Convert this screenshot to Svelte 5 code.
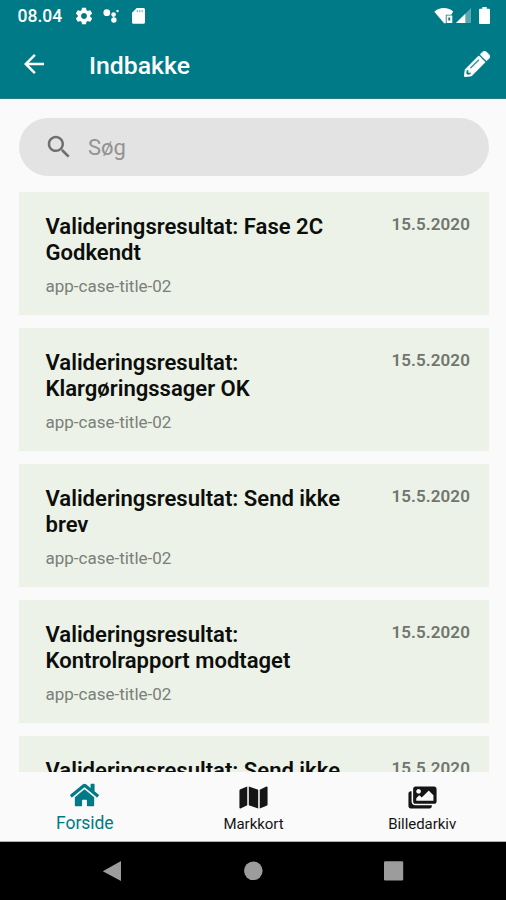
<script>
  const messages = [
    { title: 'Valideringsresultat: Fase 2C Godkendt', caseName: 'app-case-title-02', date: '15.5.2020' },
    { title: 'Valideringsresultat: Klargøringssager OK', caseName: 'app-case-title-02', date: '15.5.2020' },
    { title: 'Valideringsresultat: Send ikke brev', caseName: 'app-case-title-02', date: '15.5.2020' },
    { title: 'Valideringsresultat: Kontrolrapport modtaget', caseName: 'app-case-title-02', date: '15.5.2020' },
    { title: 'Valideringsresultat: Send ikke brev', caseName: 'app-case-title-02', date: '15.5.2020' },
  ];

  const tabs = [
    {
      label: 'Forside',
      icon: 'M280.37 148.26L96 300.11V464a16 16 0 0 0 16 16l112.06-.29a16 16 0 0 0 15.92-16V368a16 16 0 0 1 16-16h64a16 16 0 0 1 16 16v95.64a16 16 0 0 0 16 16.05L464 480a16 16 0 0 0 16-16V300L295.67 148.26a12.19 12.19 0 0 0-15.3 0zM571.6 251.47L488 182.56V44.05a12 12 0 0 0-12-12h-56a12 12 0 0 0-12 12v72.61L318.47 43a48 48 0 0 0-61 0L4.34 251.47a12 12 0 0 0-1.6 16.9l25.5 31A12 12 0 0 0 45.15 301l235.22-193.74a12.19 12.19 0 0 1 15.3 0L530.9 301a12 12 0 0 0 16.9-1.6l25.5-31a12 12 0 0 0-1.7-16.93z',
    },
    {
      label: 'Markkort',
      icon: 'M0 117.66v346.32c0 11.32 11.43 19.06 21.94 14.86L160 416V32L20.12 87.95A32.006 32.006 0 0 0 0 117.66zM192 416l192 64V96L192 32v384zM554.06 33.16L416 96v384l139.88-55.95A31.996 31.996 0 0 0 576 394.34V48.02c0-11.32-11.43-19.06-21.94-14.86z',
    },
    {
      label: 'Billedarkiv',
      icon: 'M480 416v16c0 26.51-21.49 48-48 48H48c-26.51 0-48-21.49-48-48V176c0-26.51 21.49-48 48-48h16v208c0 44.112 35.888 80 80 80h336zm96-80V80c0-26.51-21.49-48-48-48H144c-26.51 0-48 21.49-48 48v256c0 26.51 21.49 48 48 48h384c26.51 0 48-21.49 48-48zM256 128c0 26.51-21.49 48-48 48s-48-21.49-48-48 21.49-48 48-48 48 21.49 48 48zm-96 144l55.515-55.515c4.686-4.686 12.284-4.686 16.971 0L272 256l135.515-135.515c4.686-4.686 12.284-4.686 16.971 0L512 208v112H160v-48z',
    },
  ];

  let activeTab = 'Forside';
  let search = '';
</script>

<div class="screen">
  <header>
    <div class="status-bar">
      <span class="clock">08.04</span>
      <svg class="gear" viewBox="0 0 24 24">
        <path d="M19.43 12.98c.04-.32.07-.64.07-.98s-.03-.66-.07-.98l2.11-1.65c.19-.15.24-.42.12-.64l-2-3.46c-.12-.22-.39-.3-.61-.22l-2.49 1c-.52-.4-1.08-.73-1.69-.98l-.38-2.65C14.46 2.18 14.25 2 14 2h-4c-.25 0-.46.18-.49.42l-.38 2.65c-.61.25-1.17.59-1.69.98l-2.49-1c-.23-.09-.49 0-.61.22l-2 3.46c-.13.22-.07.49.12.64l2.11 1.65c-.04.32-.07.65-.07.98s.03.66.07.98l-2.11 1.65c-.19.15-.24.42-.12.64l2 3.46c.12.22.39.3.61.22l2.49-1c.52.4 1.08.73 1.69.98l.38 2.65c.03.24.24.42.49.42h4c.25 0 .46-.18.49-.42l.38-2.65c.61-.25 1.17-.59 1.69-.98l2.49 1c.23.09.49 0 .61-.22l2-3.46c.12-.22.07-.49-.12-.64l-2.11-1.65zM12 15.5c-1.93 0-3.5-1.57-3.5-3.5s1.57-3.5 3.5-3.5 3.5 1.57 3.5 3.5-1.57 3.5-3.5 3.5z" />
      </svg>
      <svg class="assistant" viewBox="0 0 16 16">
        <circle cx="3.8" cy="4.7" r="3.4" />
        <circle cx="10.6" cy="6.6" r="2.3" />
        <circle cx="14.5" cy="3" r="1.2" />
        <circle cx="10.9" cy="12" r="2.7" />
      </svg>
      <svg class="sd" viewBox="0 0 13 16">
        <path d="M4.7 0h6.8A1.5 1.5 0 0 1 13 1.5v12.7a1.5 1.5 0 0 1-1.5 1.5h-10A1.5 1.5 0 0 1 0 14.2V4.7z" />
        <path class="notch" d="M4.7 2h1.2v2.2H4.7zM7.1 2h1.2v2.2H7.1zM9.5 2h1.2v2.2H9.5z" />
      </svg>
      <span class="spacer"></span>
      <svg class="wifi" viewBox="0 0 20 16">
        <path d="M.3 3.7C3 1.2 6 0 9.8 0s7 1.2 9.4 3.6L17.200 6.700h-5.400v8.500h-1.700z" />
        <path fill-rule="evenodd" d="M12.600 7.600h5.700V15h-5.700zM14.300 9.600v2.800h1.900V9.600z" />
      </svg>
      <svg class="signal" viewBox="0 0 15 15">
        <path class="dim" d="M0 15L15 0v15z" />
        <path d="M0 15L9.3 5.700V15z" />
      </svg>
      <svg class="battery" viewBox="0 0 11 17">
        <path d="M3.3 0h4.400v1.800H10a1 1 0 0 1 1 1V16a1 1 0 0 1-1 1H1a1 1 0 0 1-1-1V2.800a1 1 0 0 1 1-1h2.300z" />
      </svg>
    </div>
    <div class="toolbar">
      <svg class="back" viewBox="0 0 24 24">
        <path d="M20 11H7.830l5.590-5.590L12 4l-8 8 8 8 1.410-1.410L7.830 13H20v-2z" />
      </svg>
      <h1>Indbakke</h1>
      <svg class="edit" viewBox="0 0 512 512">
        <path d="M497.900 142.100l-46.100 46.100c-4.700 4.700-12.300 4.700-17 0l-111-111c-4.700-4.700-4.700-12.300 0-17l46.100-46.100c18.700-18.700 49.100-18.700 67.900 0l60.100 60.100c18.800 18.700 18.800 49.100 0 67.900zM284.200 99.800L21.600 362.400.4 483.900c-2.900 16.400 11.400 30.600 27.800 27.800l121.500-21.300 262.600-262.600c4.700-4.700 4.700-12.300 0-17l-111-111c-4.800-4.700-12.400-4.700-17.100 0zM124.100 339.900c-5.500-5.500-5.500-14.300 0-19.800l154-154c5.500-5.500 14.300-5.500 19.800 0s5.500 14.300 0 19.800l-154 154c-5.500 5.500-14.300 5.500-19.800 0zM88 424h48v36.300l-64.500 11.300-31.100-31.100L51.700 376H88v48z" />
      </svg>
    </div>
  </header>

  <main>
    <label class="search">
      <svg viewBox="0 0 24 24">
        <path d="M15.500 14h-.79l-.28-.27C15.410 12.590 16 11.110 16 9.500 16 5.910 13.090 3 9.500 3S3 5.910 3 9.500 5.910 16 9.500 16c1.610 0 3.090-.59 4.230-1.570l.27.28v.79l5 4.990L20.490 19l-4.990-5zm-6 0C7.010 14 5 11.990 5 9.500S7.010 5 9.500 5 14 7.010 14 9.500 11.990 14 9.500 14z" />
      </svg>
      <input type="text" placeholder="Søg" bind:value={search} />
    </label>

    <div class="list">
      {#each messages as message}
        <article class="card">
          <div class="text">
            <h2>{message.title}</h2>
            <p>{message.caseName}</p>
          </div>
          <time>{message.date}</time>
        </article>
      {/each}
    </div>
  </main>

  <nav class="tabs">
    {#each tabs as tab}
      <button class="tab" class:active={activeTab === tab.label} on:click={() => (activeTab = tab.label)}>
        <svg viewBox="0 0 576 512"><path d={tab.icon} /></svg>
        <span>{tab.label}</span>
      </button>
    {/each}
  </nav>

  <div class="system-nav">
    <svg viewBox="0 0 20 20"><path d="M19 0v20L.8 10.200z" /></svg>
    <svg viewBox="0 0 20 20"><circle cx="10.300" cy="9.800" r="9.300" /></svg>
    <svg viewBox="0 0 20 20"><rect x="0" y=".3" width="19.200" height="19.200" rx="1.200" /></svg>
  </div>
</div>

<style>
  :global(body) {
    margin: 0;
  }

  .screen {
    display: flex;
    flex-direction: column;
    width: 506px;
    height: 900px;
    overflow: hidden;
    background: #fafafa;
    font-family: Roboto, sans-serif;
  }

  svg {
    display: block;
    flex: none;
    fill: currentColor;
  }

  header {
    flex: none;
    height: 99px;
    box-sizing: border-box;
    background: #007a87;
    border-bottom: 1px solid #2b7b86;
    color: #fff;
  }

  .status-bar {
    display: flex;
    align-items: center;
    height: 31px;
    padding: 0 16px 0 17.5px;
    box-sizing: border-box;
  }

  .clock {
    width: 56.5px;
    font-size: 17.5px;
    font-weight: 500;
  }

  .gear {
    width: 20px;
    height: 20px;
  }

  .assistant {
    width: 16px;
    height: 16px;
    margin-left: 9px;
  }

  .sd {
    width: 13px;
    height: 16px;
    margin-left: 13px;
  }

  .notch {
    fill: #007a87;
    opacity: 0.5;
  }

  .spacer {
    flex: 1;
  }

  .wifi {
    width: 20px;
    height: 16px;
  }

  .signal {
    width: 15px;
    height: 15px;
    margin-left: 2px;
  }

  .dim {
    opacity: 0.35;
  }

  .battery {
    width: 11px;
    height: 17px;
    margin-left: 8px;
  }

  .toolbar {
    display: flex;
    align-items: center;
    height: 67px;
    padding: 0 16px 1px 19px;
    box-sizing: border-box;
  }

  .back {
    width: 30px;
    height: 30px;
  }

  h1 {
    flex: 1;
    margin: 0 0 0 40px;
    padding-top: 3px;
    font-size: 24.8px;
    font-weight: 500;
    line-height: 30px;
  }

  .edit {
    width: 26px;
    height: 26px;
  }

  .edit path {
    stroke: currentColor;
    stroke-width: 8;
  }

  main {
    flex: 1;
    min-height: 0;
    padding: 19px 17px 0 19px;
    overflow: hidden;
  }

  .search {
    display: flex;
    align-items: center;
    height: 58px;
    padding: 0 25px;
    box-sizing: border-box;
    border-radius: 30px;
    background: #e3e3e3;
    color: #6f6f6f;
  }

  .search svg {
    width: 30px;
    height: 30px;
  }

  input {
    flex: 1;
    min-width: 0;
    margin-left: 14px;
    padding: 0;
    border: 0;
    outline: 0;
    background: none;
    font-family: inherit;
    font-size: 22px;
    color: #333;
  }

  input::placeholder {
    color: #929292;
    opacity: 1;
  }

  .list {
    display: flex;
    flex-direction: column;
    gap: 13px;
    margin-top: 16px;
  }

  .card {
    display: flex;
    justify-content: space-between;
    height: 123px;
    flex: none;
    padding: 22px 19px 0 26.5px;
    box-sizing: border-box;
    background: #ecf2e8;
  }

  .text {
    width: 310px;
  }

  h2 {
    margin: 0;
    font-size: 22.05px;
    font-weight: 600;
    line-height: 26px;
    color: #0c0e0b;
  }

  p {
    margin: 9px 0 0;
    font-size: 17px;
    line-height: 22px;
    color: #7a7f78;
  }

  time {
    font-size: 17px;
    font-weight: 600;
    line-height: 20px;
    letter-spacing: 0.1px;
    color: #70756e;
  }

  .tabs {
    display: flex;
    flex: none;
    height: 70px;
    box-sizing: border-box;
    border-bottom: 1px solid #b0b0b0;
    background: #fafafa;
  }

  .tab {
    display: flex;
    flex: 1;
    flex-direction: column;
    align-items: center;
    padding: 13px 0 0 1px;
    border: 0;
    background: none;
    font-family: inherit;
    font-size: 15px;
    letter-spacing: -0.05px;
    color: #151515;
  }

  .tab svg {
    width: 29px;
    height: 25px;
  }

  .tab span {
    margin-top: 4px;
    line-height: 20px;
  }

  .tab.active {
    padding-top: 10px;
    font-size: 17.5px;
    color: #007a87;
  }

  .tab.active svg {
    width: 29px;
    height: 26px;
  }

  .tab.active span {
    margin-top: 5px;
  }

  .system-nav {
    display: flex;
    flex: none;
    align-items: center;
    justify-content: space-between;
    height: 58px;
    padding: 0 102px;
    box-sizing: border-box;
    background: #000;
    color: #9c9c9c;
  }

  .system-nav svg {
    width: 20px;
    height: 20px;
  }
</style>
